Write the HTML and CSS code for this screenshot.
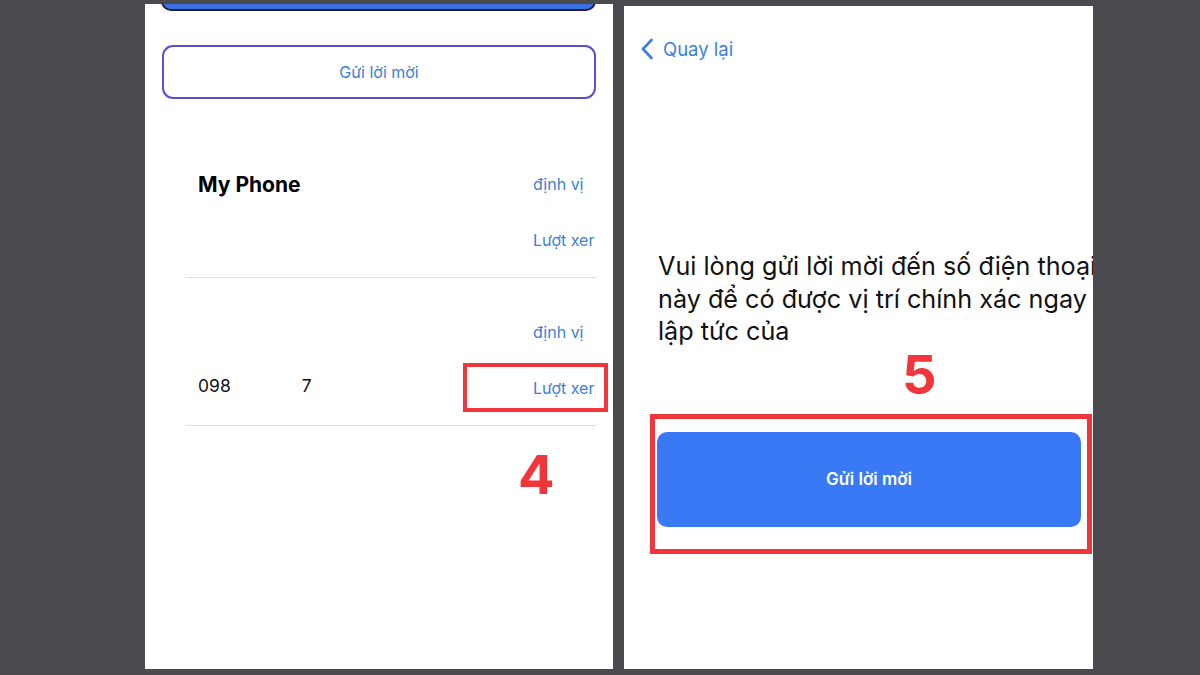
FILE: index.html
```html
<!DOCTYPE html>
<html lang="vi">
<head>
<meta charset="utf-8">
<title>Gửi lời mời</title>
<link rel="stylesheet" href="styles.css">
</head>
<body>
<div class="stage">
  <section class="panel panel-left">
    <div class="top-btn"></div>
    <div class="outline-btn">Gửi lời mời</div>

    <div class="entry entry-first">
      <div class="name name-bold">My Phone</div>
      <div class="action">định vị</div>
      <div class="name"></div>
      <div class="action">Lượt xer</div>
    </div>

    <div class="entry entry-second">
      <div class="name"></div>
      <div class="action">định vị</div>
      <div class="name name-num"><span>098</span><span class="num-tail">7</span></div>
      <div class="action action-hl">Lượt xer<span class="mark mark-4"></span></div>
    </div>

    <div class="step step-4">4</div>
  </section>

  <section class="panel panel-right">
    <div class="back">
      <svg class="chev" width="14" height="22" viewBox="0 0 14 22" aria-hidden="true">
        <path d="M11.5 2 L3 11 L11.5 20" fill="none" stroke="#3a7fe0" stroke-width="2.6" stroke-linecap="round" stroke-linejoin="round"/>
      </svg>
      <span>Quay lại</span>
    </div>

    <p class="message">Vui lòng gửi lời mời đến số điện thoại<br>này để có được vị trí chính xác ngay<br><span class="cut">lập tức của</span></p>

    <div class="step step-5">5</div>

    <div class="cta-wrap">
      <div class="cta">Gửi lời mời</div>
      <div class="mark mark-5"></div>
    </div>
  </section>
</div>
</body>
</html>
```

FILE: styles.css
```css
* { box-sizing: border-box; }

html, body {
  margin: 0;
  padding: 0;
  background: #4b4a4f;
}

body {
  width: 1200px;
  height: 675px;
  overflow: hidden;
  font-family: Inter, "Noto Sans", "DejaVu Sans", sans-serif;
}

.stage {
  display: flex;
  gap: 11px;
  padding-left: 145px;
  align-items: flex-start;
}

.panel {
  position: relative;
  width: 468px;
  background: #ffffff;
  overflow: hidden;
}

.panel-left {
  margin-top: 4px;
  height: 665px;
}

.panel-right {
  margin-top: 6px;
  height: 663px;
  width: 469px;
}

/* ---------- left panel ---------- */

.top-btn {
  margin: -40px 0 0 16px;
  width: 435px;
  height: 47px;
  background: #3a72e6;
  border: 2px solid #1c1f3a;
  border-radius: 10px;
}

.outline-btn {
  margin: 34px 0 0 17px;
  width: 434px;
  height: 54px;
  border: 2px solid #5a4fcf;
  border-radius: 11px;
  display: flex;
  align-items: center;
  justify-content: center;
  color: #3a7fdb;
  font-size: 16px;
}

.entry {
  margin-left: 41px;
  width: 410px;
  padding: 0 0 9px 12px;
  display: grid;
  grid-template-columns: 335px 1fr;
  grid-auto-rows: 56px;
  align-items: center;
  border-bottom: 1px solid #dcdcdc;
}

.entry-first { margin-top: 57px; }
.entry-second { padding-top: 26px; }

.name {
  color: #111;
  font-size: 17.5px;
}

.name-bold {
  font-weight: 700;
  font-size: 21px;
  color: #000;
}

.name-num {
  margin-top: -6px;
}

.num-tail {
  margin-left: 71px;
}

.action {
  position: relative;
  color: #3a7fdb;
  font-size: 16px;
}

.mark {
  position: absolute;
  border: 4px solid #f0363a;
}

.mark-4 {
  left: -70px;
  top: -15px;
  width: 145px;
  height: 49px;
}

.step {
  position: absolute;
  color: #f0363a;
  font-weight: 700;
  font-size: 54px;
  line-height: 1;
}

.step-4 { left: 373px; top: 444px; }

/* ---------- right panel ---------- */

.back {
  margin: 31px 0 0 16px;
  display: flex;
  align-items: center;
  gap: 9px;
  color: #3a7fdb;
  font-size: 18.5px;
  height: 24px;
}

.message {
  margin: 189px 0 0 34px;
  white-space: nowrap;
  font-size: 25.2px;
  line-height: 32.5px;
  color: #111;
}

.cut {
  display: inline-block;
  width: 132px;
  overflow: hidden;
  vertical-align: top;
}

.step-5 { left: 278px; top: 342px; }

.cta-wrap {
  position: relative;
  margin: 84px 0 0 33px;
  width: 424px;
}

.cta {
  height: 95px;
  background: #3a79f6;
  border-radius: 10px;
  color: #fff;
  font-weight: 600;
  font-size: 17px;
  display: flex;
  align-items: center;
  justify-content: center;
}

.mark-5 {
  left: -7px;
  top: -18px;
  width: 442px;
  height: 140px;
  border-width: 5px;
}
```
